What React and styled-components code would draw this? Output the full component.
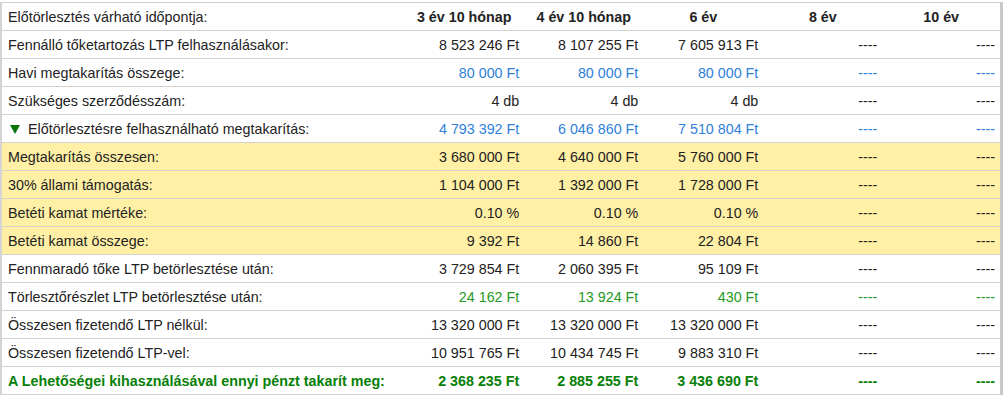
import React from "react";
import styled, { createGlobalStyle } from "styled-components";

const Global = createGlobalStyle`
  html, body { margin: 0; padding: 0; background: #fff; }
  body { font-family: "Liberation Sans", Arial, sans-serif; }
`;

const Wrap = styled.div`
  padding: 2px 0 0 0;
  width: 1005px;
`;

const Table = styled.table`
  border-collapse: collapse;
  table-layout: fixed;
  width: 1003px;
  font-size: 14.3px;
  color: #222;
  border-top: 1px solid #cfcfcf;
  border-left: 2px solid #d4d4d4;
  border-right: 3px solid #c9c9c9;
`;

const Row = styled.tr`
  background: ${(p) => (p.$hl ? "#fff0a6" : "#fff")};
  color: ${(p) =>
    p.$tone === "blue"
      ? "#2f80d8"
      : p.$tone === "green"
      ? "#1f991f"
      : p.$tone === "total"
      ? "#078007"
      : "#222"};
  font-weight: ${(p) => (p.$tone === "total" ? 700 : 400)};
  height: 28px;
  & > td, & > th {
    border-bottom: 1px solid #d2d2d2;
  }
`;

const Label = styled.td`
  padding: 0 0 0 6px;
  text-align: left;
  white-space: nowrap;
  color: ${(p) => (p.$plain ? "#222" : "inherit")};
`;

const Head = styled.th`
  font-weight: 700;
  text-align: center;
  padding: 0;
  color: #222;
`;

const Val = styled.td`
  text-align: right;
  padding: 0 5px 0 0;
  white-space: nowrap;
`;

const Tri = styled.svg`
  display: inline-block;
  width: 10px;
  height: 9px;
  margin: 0 8px 0 2px;
  vertical-align: 0px;
`;

const rows = [
  { label: "Fennálló tőketartozás LTP felhasználásakor:", vals: ["8 523 246 Ft", "8 107 255 Ft", "7 605 913 Ft"] },
  { label: "Havi megtakarítás összege:", vals: ["80 000 Ft", "80 000 Ft", "80 000 Ft"], tone: "blue", plainLabel: true },
  { label: "Szükséges szerződésszám:", vals: ["4 db", "4 db", "4 db"] },
  { label: "Előtörlesztésre felhasználható megtakarítás:", vals: ["4 793 392 Ft", "6 046 860 Ft", "7 510 804 Ft"], tone: "blue", plainLabel: true, tri: true },
  { label: "Megtakarítás összesen:", vals: ["3 680 000 Ft", "4 640 000 Ft", "5 760 000 Ft"], hl: true },
  { label: "30% állami támogatás:", vals: ["1 104 000 Ft", "1 392 000 Ft", "1 728 000 Ft"], hl: true },
  { label: "Betéti kamat mértéke:", vals: ["0.10 %", "0.10 %", "0.10 %"], hl: true },
  { label: "Betéti kamat összege:", vals: ["9 392 Ft", "14 860 Ft", "22 804 Ft"], hl: true },
  { label: "Fennmaradó tőke LTP betörlesztése után:", vals: ["3 729 854 Ft", "2 060 395 Ft", "95 109 Ft"] },
  { label: "Törlesztőrészlet LTP betörlesztése után:", vals: ["24 162 Ft", "13 924 Ft", "430 Ft"], tone: "green", plainLabel: true },
  { label: "Összesen fizetendő LTP nélkül:", vals: ["13 320 000 Ft", "13 320 000 Ft", "13 320 000 Ft"] },
  { label: "Összesen fizetendő LTP-vel:", vals: ["10 951 765 Ft", "10 434 745 Ft", "9 883 310 Ft"] },
  { label: "A Lehetőségei kihasználásával ennyi pénzt takarít meg:", vals: ["2 368 235 Ft", "2 885 255 Ft", "3 436 690 Ft"], tone: "total" },
];

export default function App() {
  return (
    <Wrap>
      <Global />
      <Table>
        <colgroup>
          <col style={{ width: 403 }} />
          <col style={{ width: 120 }} />
          <col style={{ width: 119 }} />
          <col style={{ width: 120 }} />
          <col style={{ width: 119 }} />
          <col style={{ width: 119 }} />
        </colgroup>
        <tbody>
          <Row>
            <Label>Előtörlesztés várható időpontja:</Label>
            <Head>3 év 10 hónap</Head>
            <Head>4 év 10 hónap</Head>
            <Head>6 év</Head>
            <Head>8 év</Head>
            <Head>10 év</Head>
          </Row>
          {rows.map((r) => (
            <Row key={r.label} $hl={r.hl} $tone={r.tone}>
              <Label $plain={r.plainLabel}>
                {r.tri && (
                  <Tri viewBox="0 0 10 9">
                    <polygon points="0,0 10,0 5,9" fill="#0a740a" />
                  </Tri>
                )}
                {r.label}
              </Label>
              {r.vals.map((v, i) => (
                <Val key={i}>{v}</Val>
              ))}
              <Val>----</Val>
              <Val>----</Val>
            </Row>
          ))}
        </tbody>
      </Table>
    </Wrap>
  );
}
